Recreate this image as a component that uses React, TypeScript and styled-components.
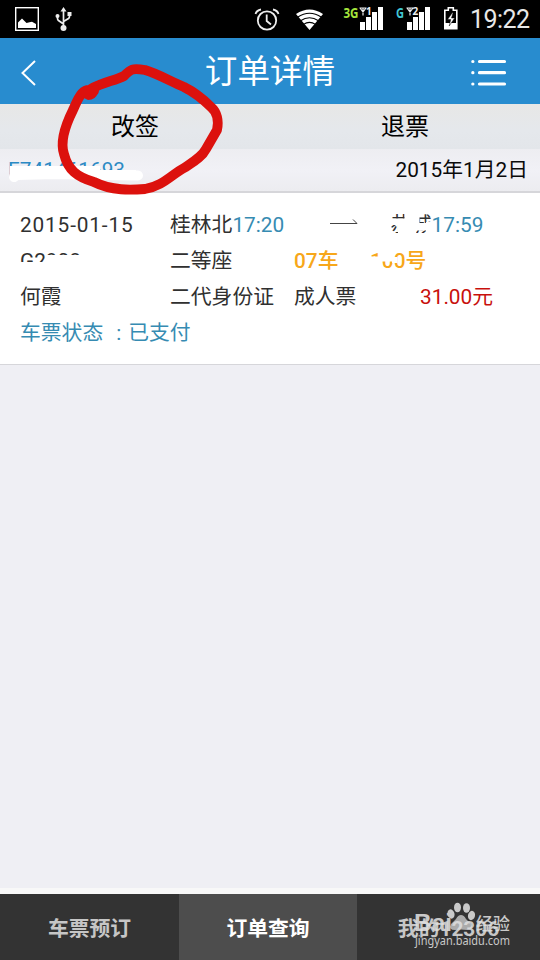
import React from 'react';
import styled, { createGlobalStyle } from 'styled-components';

const GlobalStyle = createGlobalStyle`
  * { box-sizing: border-box; }
  body { margin: 0; background: #efeff4; }
`;

const Screen = styled.div`
  position: relative;
  width: 540px;
  height: 960px;
  display: flex;
  flex-direction: column;
  overflow: hidden;
  background: #efeff4;
  font-family: Roboto, 'Noto Sans CJK SC', sans-serif;
  font-size: 20.8px;
  color: #303030;
  white-space: nowrap;
`;

const StatusBar = styled.header`
  height: 38px;
  flex: none;
  display: flex;
  justify-content: space-between;
  background: #000;
`;

const ClockText = styled.text`
  font: 400 25px Roboto, sans-serif;
  fill: #e8e8e8;
`;

const NetText = styled.text`
  font: 700 14.5px 'Open Sans', sans-serif;
`;

const SimText = styled.text`
  font: 700 10px 'Open Sans', sans-serif;
  fill: #eee;
`;

const TitleBar = styled.div`
  height: 66px;
  flex: none;
  display: grid;
  grid-template-columns: 60px 1fr 60px;
  align-items: center;
  padding-right: 10px;
  padding-left: 10px;
  background: #288ccf;
`;

const Title = styled.h1`
  margin: 0;
  text-align: center;
  font-size: 32.6px;
  font-weight: 400;
  line-height: 68px;
  height: 68px;
  color: #fff;
`;

const Actions = styled.div`
  height: 45px;
  flex: none;
  display: grid;
  grid-template-columns: 1fr 1fr;
  background: linear-gradient(#e7e7e6, #e5e8ec 60%, #e3e6ea);
`;

const Action = styled.button`
  border: 0;
  padding: 2px 0 0;
  background: none;
  font: inherit;
  font-size: 24px;
  line-height: 43px;
  color: #000;
`;

const OrderBar = styled.div`
  height: 44px;
  flex: none;
  display: flex;
  justify-content: space-between;
  padding: 0 12px 0 8px;
  line-height: 43px;
  color: #0a0a0a;
  background: linear-gradient(#ededf1, #f1f1f6 50%, #ececf0);
  border-bottom: 2px solid #d6d6da;
`;

const OrderNumber = styled.span`
  color: #2b8ac4;
`;

const Ticket = styled.section`
  height: 172px;
  flex: none;
  padding: 14px 20px 0;
  background: #fff;
  border-bottom: 1px solid #d6d6da;
`;

const Row = styled.div<{ $cols: string }>`
  display: grid;
  grid-template-columns: ${(p) => p.$cols};
  height: 36px;
  line-height: 36px;
`;

const Tint = styled.span<{ $color: string; $bold?: boolean }>`
  color: ${(p) => p.$color};
  font-weight: ${(p) => (p.$bold ? 500 : 400)};
`;

const DateText = styled.span`
  letter-spacing: 0.85px;
`;

const StatusColon = styled.span`
  margin: 0 7px 0 13px;
`;

const ArrowCell = styled.span`
  display: flex;
  align-items: center;
  padding-bottom: 4px;
`;

const Filler = styled.main`
  flex: 1;
`;

const Nav = styled.nav`
  height: 72px;
  flex: none;
  display: grid;
  grid-template-columns: 179px 178px 183px;
  border-top: 6px solid #f8f8f8;
`;

const NavItem = styled.div<{ $active?: boolean }>`
  text-align: center;
  line-height: 70px;
  height: 66px;
  font-weight: 700;
  color: ${(p) => (p.$active ? '#fff' : '#c6c6c6')};
  background: ${(p) => (p.$active ? '#4d4d4d' : '#333')};
`;

const Markup = styled.svg`
  position: absolute;
  inset: 0;
  pointer-events: none;
`;

const Brand = styled.text`
  font: 700 23px 'Liberation Sans', sans-serif;
`;
const BrandCjk = styled.text`
  font: 500 17px 'Noto Sans CJK SC', sans-serif;
`;
const BrandUrl = styled.text`
  font: 400 11.8px 'Noto Sans', sans-serif;
`;

function Signal({ x }: { x: number }) {
  return (
    <g fill="#fff">
      <path d={`M${x} 22h5v8h-5zM${x + 6} 17h5v13h-5zM${x + 12} 12h5v18h-5zM${x + 18} 7h5v23h-5z`} />
      <path d={`M${x - 0.5} 8h7M${x} 8l3 4l3-4M${x + 3} 8v7.500`} fill="none" stroke="#eee" strokeWidth="1.2" />
    </g>
  );
}

function StatusLeft() {
  return (
    <svg width="90" height="38" viewBox="0 0 90 38">
      <rect x="15.700" y="7.700" width="22.600" height="22.600" fill="none" stroke="#fff" strokeWidth="1.400" />
      <path d="M18 28v-5.500l4-4 2.500 2.500 2 2 3-.8 2.500-.5 4 2.300v4z" fill="#fff" />
      <g fill="none" stroke="#eee" strokeWidth="1.700">
        <path d="M63.500 10v18M63.500 24l-5-3.500q-1-.8-1-2v-2M63.500 21.500l5-3q1-.8 1-2v-2" />
      </g>
      <path d="M63.500 7l3 4.500h-6zM67.500 12h4v4h-4z" fill="#eee" />
      <circle cx="57.500" cy="16" r="2" fill="#eee" />
      <circle cx="63.500" cy="28" r="3" fill="#eee" />
    </svg>
  );
}

function StatusRight() {
  return (
    <svg width="300" height="38" viewBox="240 0 300 38">
      <g fill="none" stroke="#eee" strokeWidth="1.800">
        <circle cx="267" cy="20.500" r="9.200" />
        <path d="M266.700 14.500v6.500l4.300 3.500M255.500 14q1-3.500 5.500-4.500M278.500 14q-1-3.500-5.500-4.500" />
      </g>
      <path d="M296 14q13.500-9 27 0L309.500 30z" fill="#fff" />
      <g fill="none" stroke="#000" strokeWidth="1.100">
        <path d="M297.500 17.200q12-8 24 0M300.500 20.800q9-6 18 0M303.500 24.400q6-4 12 0" />
      </g>
      <NetText x="343.500" y="17.500" fill="#a4e53c" textLength="15" lengthAdjust="spacingAndGlyphs">3G</NetText>
      <Signal x={360} />
      <SimText x="366" y="15">1</SimText>
      <NetText x="396" y="17.500" fill="#42c6d4" textLength="8" lengthAdjust="spacingAndGlyphs">G</NetText>
      <Signal x={407} />
      <SimText x="412.500" y="15">2</SimText>
      <path d="M444.800 10.300h3.500v-2.500h5v2.500h3.500v18.500h-12z" fill="none" stroke="#fff" strokeWidth="1.600" />
      <path d="M445 23h12v6h-12z" fill="#fff" />
      <path d="M452.500 12.500l-5 7h3.200l-1.500 6.500 5.500-8h-3.200l1.500-5z" fill="#fff" stroke="#000" strokeWidth=".5" />
      <ClockText x="470" y="28" textLength="60">19:22</ClockText>
    </svg>
  );
}

function HandMarks() {
  return (
    <Markup width="540" height="960" viewBox="0 0 540 960">
      {/* White strokes hiding private digits and names */}
      <path d="M14 177L17 175 55 174 100 175 138 175.500" fill="none" stroke="#fff" strokeWidth="10" strokeLinecap="round" strokeLinejoin="round" />
      <path d="M10 166h90v4h36v8H10z" fill="#fff" />
      <g fill="#fff">
        <path d="M18 262h68v9H18zM46 255h40v10H46z" />
        <path d="M388 218.500h31v6.500h-31zM398 223h34v7.500h-34zM404.500 210h15v20h-15zM388 233h44v7h-44zM398 224h18v12h-18zM426 222h6v14h-6zM388 222h3.500v14h-3.500z" />
        <path d="M369 256.500h12.500v14h-12.500zM380 248h14v13.500h-14zM392 257h5.500v6h-5.500z" />
      </g>
      <path d="M94 91C82 86 78 99 73 110C66 124 60 142 64 154C68 170 77 177 94 182C112 191 131 190 145 189C163 186 171 175 184 168C193 162 202 157 206 149L217 130C219 121 217 112 211 107C203 99 194 92 184 87C170 81 156 73 145 70C132 68 131 69 124 76C114 81 103 82 91 89" fill="none" stroke="#dc110d" strokeWidth="9.800" strokeLinecap="round" strokeLinejoin="round" />
      <path d="M82 88L99 85 98 92Q96 100 88 100L82 97z" fill="#dc110d" />
      <g fill="#dedede" opacity=".88">
        <Brand x="414" y="931" textLength="38" lengthAdjust="spacingAndGlyphs">Bai</Brand>
        <BrandCjk x="476" y="930" textLength="34">经验</BrandCjk>
        <BrandUrl x="415" y="944.500" textLength="95" lengthAdjust="spacingAndGlyphs">jingyan.baidu.com</BrandUrl>
        <ellipse cx="451" cy="914" rx="3.500" ry="4.700" transform="rotate(-15 451 914)" />
        <ellipse cx="457.500" cy="907.500" rx="3.500" ry="4.800" />
        <ellipse cx="466.500" cy="908" rx="3.500" ry="4.800" />
        <ellipse cx="471.500" cy="915.500" rx="3.500" ry="4.700" transform="rotate(15 471.500 915.500)" />
        <path fillOpacity=".8" d="M461 915q3 0 5 4l5 5q3 6-4 6-6-1-12 0-7 0-4-6l5-5q2-4 5-4z" />
      </g>
    </Markup>
  );
}

const BLUE = '#368bb2';
const AMBER = '#f7a71a';

export default function App() {
  return (
    <Screen>
      <GlobalStyle />
      <StatusBar>
        <StatusLeft />
        <StatusRight />
      </StatusBar>
      <TitleBar>
        <svg width="40" height="66" viewBox="10 38 40 66">
          <path d="M35 60L22.500 72 35 84" fill="none" stroke="#fff" strokeWidth="2" />
        </svg>
        <Title>订单详情</Title>
        <svg width="60" height="66" viewBox="470 38 60 66">
          <g stroke="#fff" strokeWidth="3.200" strokeLinecap="round">
            <path d="M479.500 60.500h25M479.500 71.700h25M479.500 83h25M472.800 60.500h.1M472.800 71.700h.1M472.800 83h.1" />
          </g>
        </svg>
      </TitleBar>
      <Actions>
        <Action>改签</Action>
        <Action>退票</Action>
      </Actions>
      <OrderBar>
        <OrderNumber>E741461693</OrderNumber>
        <span>2015年1月2日</span>
      </OrderBar>
      <Ticket>
        <Row $cols="150px 160px 60px 1fr">
          <DateText>2015-01-15</DateText>
          <span>桂林北<Tint $color={BLUE}>17:20</Tint></span>
          <ArrowCell>
            <svg width="28" height="8" viewBox="0 0 28 8">
              <path d="M0 4.500h27L23 .500" fill="none" stroke="#444" strokeWidth="1" />
            </svg>
          </ArrowCell>
          <span>恭城<Tint $color={BLUE}>17:59</Tint></span>
        </Row>
        <Row $cols="150px 124px 76px 1fr">
          <span>G2908</span>
          <span>二等座</span>
          <Tint $color={AMBER} $bold>07车</Tint>
          <Tint $color={AMBER} $bold>100号</Tint>
        </Row>
        <Row $cols="150px 124px 126px 1fr">
          <span>何霞</span>
          <span>二代身份证</span>
          <span>成人票</span>
          <Tint $color="#c8100c">31.00元</Tint>
        </Row>
        <Row $cols="1fr">
          <Tint $color={BLUE}>车票状态<StatusColon>:</StatusColon>已支付</Tint>
        </Row>
      </Ticket>
      <Filler />
      <Nav>
        <NavItem>车票预订</NavItem>
        <NavItem $active>订单查询</NavItem>
        <NavItem>我的12306</NavItem>
      </Nav>
      <HandMarks />
    </Screen>
  );
}
